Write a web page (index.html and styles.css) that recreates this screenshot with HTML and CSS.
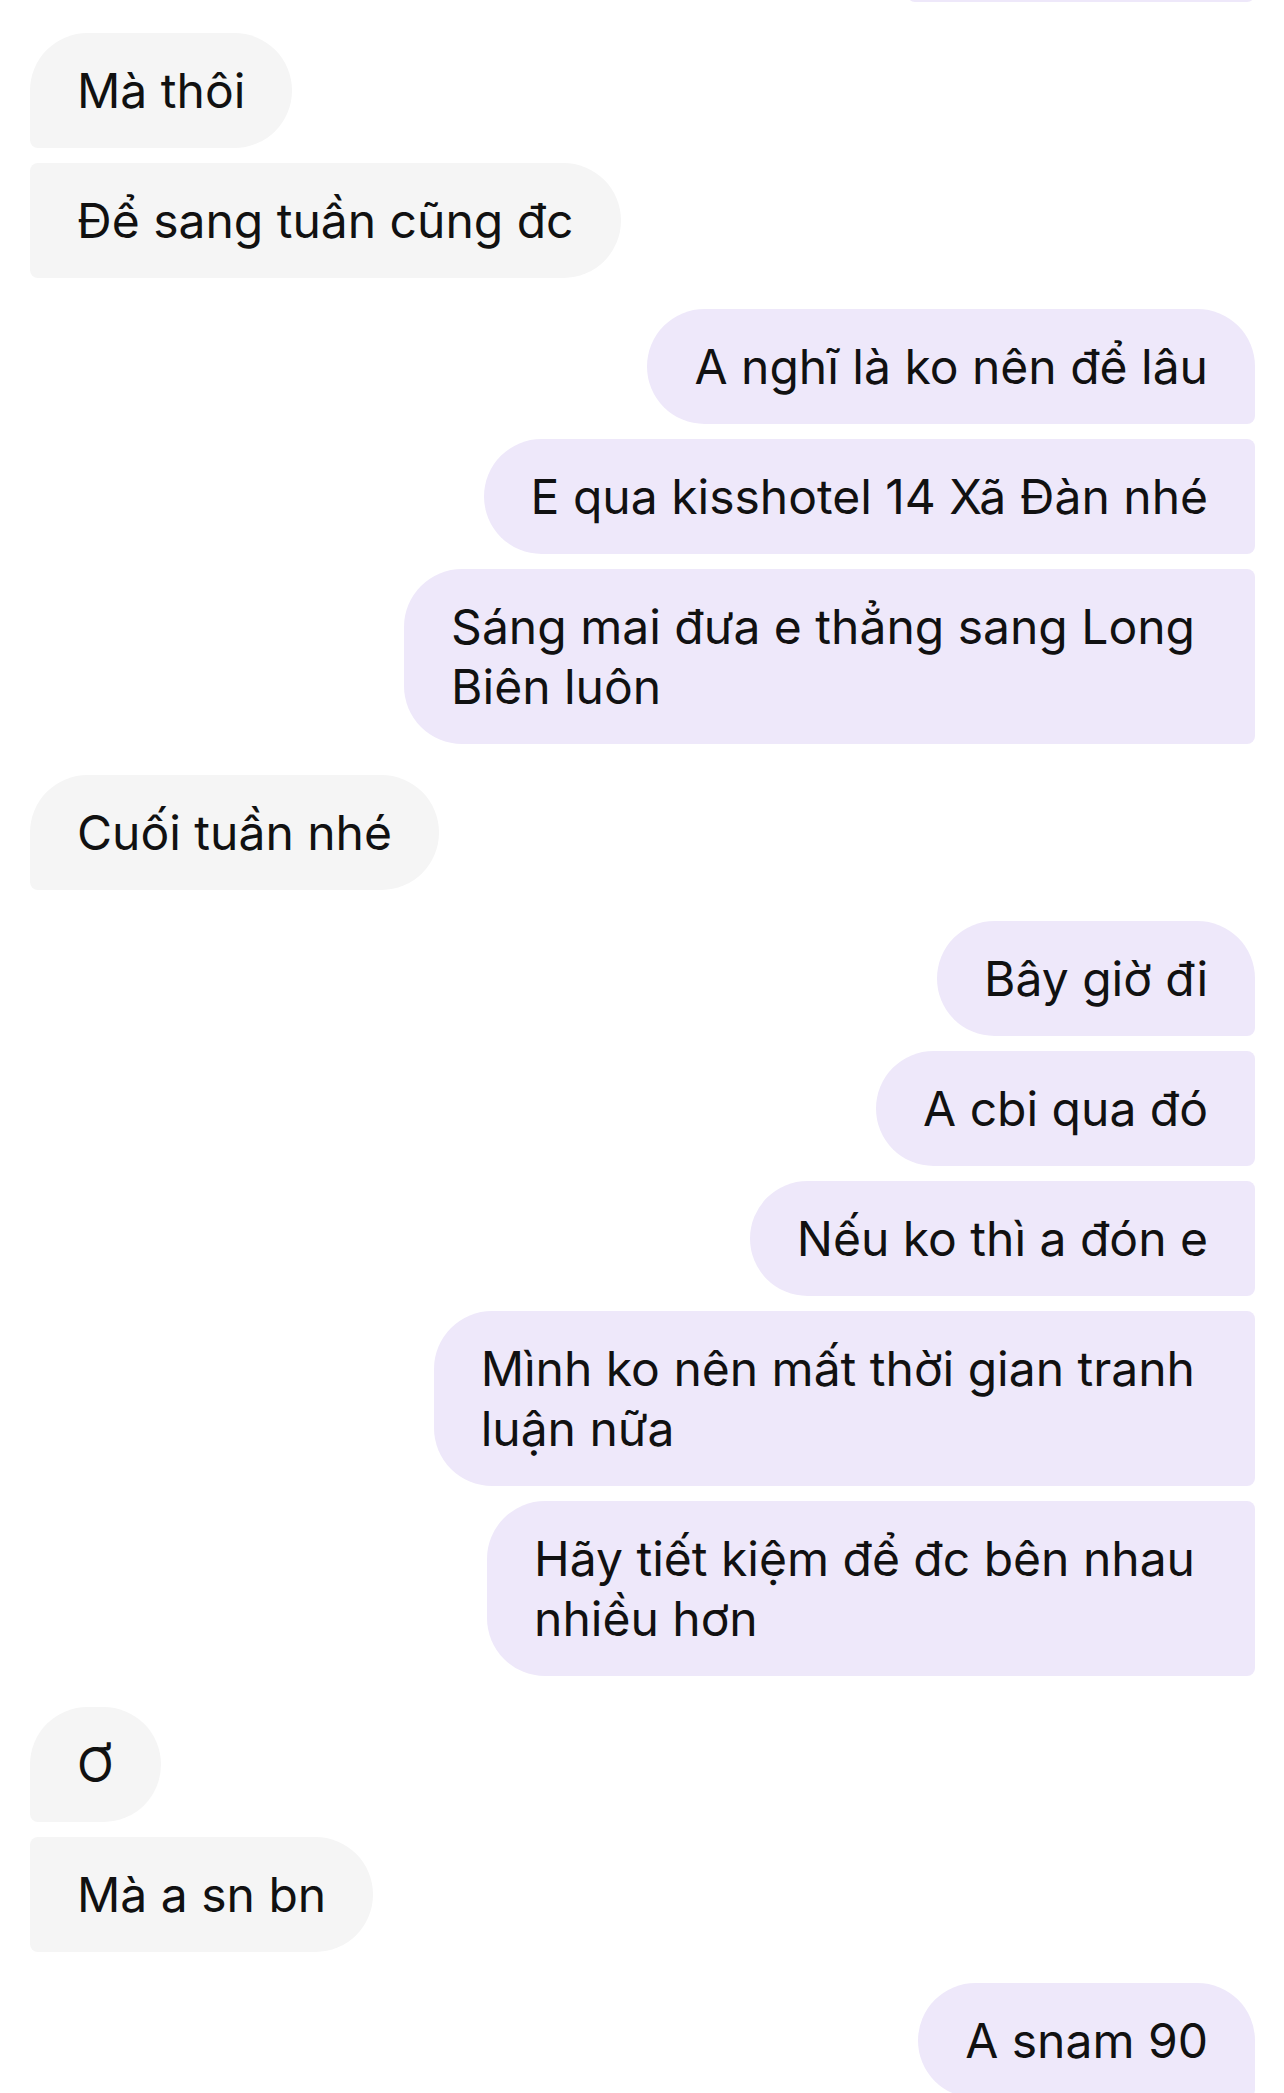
FILE: index.html
```html
<!DOCTYPE html>
<html lang="vi">
<head>
<meta charset="utf-8">
<title>Chat</title>
<link rel="stylesheet" href="styles.css">
</head>
<body>
<main class="chat">
  <div class="group sent">
    <div class="bubble cut" aria-hidden="true"></div>
  </div>
  <div class="group recv">
    <div class="bubble">Mà thôi</div>
    <div class="bubble">Để sang tuần cũng đc</div>
  </div>
  <div class="group sent">
    <div class="bubble">A nghĩ là ko nên để lâu</div>
    <div class="bubble">E qua kisshotel 14 Xã Đàn nhé</div>
    <div class="bubble wrap">Sáng mai đưa e thẳng sang Long<br>Biên luôn</div>
  </div>
  <div class="group recv">
    <div class="bubble">Cuối tuần nhé</div>
  </div>
  <div class="group sent">
    <div class="bubble">Bây giờ đi</div>
    <div class="bubble">A cbi qua đó</div>
    <div class="bubble">Nếu ko thì a đón e</div>
    <div class="bubble wrap">Mình ko nên mất thời gian tranh<br>luận nữa</div>
    <div class="bubble wrap">Hãy tiết kiệm để đc bên nhau<br>nhiều hơn</div>
  </div>
  <div class="group recv">
    <div class="bubble">Ơ</div>
    <div class="bubble">Mà a sn bn</div>
  </div>
  <div class="group sent">
    <div class="bubble">A snam 90</div>
  </div>
</main>
</body>
</html>
```

FILE: styles.css
```css
html, body {
  margin: 0;
  padding: 0;
  background: #ffffff;
}

.chat {
  display: flex;
  flex-direction: column;
  gap: 31px;
  padding: 0 29px 0 30px;
  font-family: Inter, "Noto Sans", "DejaVu Sans", sans-serif;
  color: #111111;
}

.group {
  display: flex;
  flex-direction: column;
  gap: 15px;
}

.group.recv {
  align-items: flex-start;
}

.group.sent {
  align-items: flex-end;
}

.bubble {
  box-sizing: border-box;
  padding: 27.5px 47px;
  font-size: 48px;
  line-height: 60px;
  white-space: nowrap;
}

.bubble.wrap {
  padding-right: 60px;
}

.recv .bubble {
  background: #f5f5f5;
  border-radius: 8px 58px 58px 8px;
}

.recv .bubble:first-child {
  border-top-left-radius: 58px;
}

.sent .bubble {
  background: #eee8fa;
  border-radius: 58px 8px 8px 58px;
}

.sent .bubble:first-child {
  border-top-right-radius: 58px;
}

.bubble.cut {
  width: 348px;
  height: 115px;
  margin-top: -113px;
  border-bottom-left-radius: 8px;
}
```
